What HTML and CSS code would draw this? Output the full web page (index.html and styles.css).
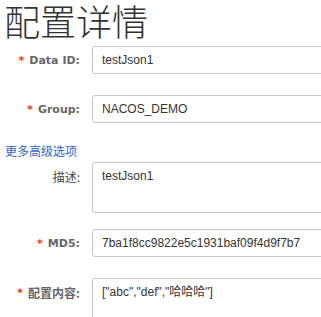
FILE: index.html
```html
<!DOCTYPE html>
<html lang="zh">
<head>
  <meta charset="UTF-8" />
  <meta name="viewport" content="width=device-width, initial-scale=1.0"/>
  <title>配置详情</title>
  <link rel="stylesheet" href="styles.css">
</head>
<body>
  <h1 class="title">配置详情</h1>

  <div class="form">
    <div class="form-item item-dataid">
      <label class="label required">Data ID:</label>
      <div class="control">
        <input class="input" type="text" value="testJson1" readonly />
      </div>
    </div>

    <div class="form-item item-group">
      <label class="label required">Group:</label>
      <div class="control">
        <input class="input" type="text" value="NACOS_DEMO" readonly />
      </div>
    </div>

    <a class="more-link" href="#">更多高级选项</a>

    <div class="form-item item-desc">
      <label class="label zh plain">描述:</label>
      <div class="control">
        <textarea class="textarea desc" readonly>testJson1</textarea>
      </div>
    </div>

    <div class="form-item item-md5">
      <label class="label required">MD5:</label>
      <div class="control">
        <input class="input" type="text" value="7ba1f8cc9822e5c1931baf09f4d9f7b7" readonly />
      </div>
    </div>

    <div class="form-item item-content">
      <label class="label zh required">配置内容:</label>
      <div class="control">
        <textarea class="textarea content" readonly>["abc","def","哈哈哈"]</textarea>
      </div>
    </div>
  </div>
</body>
</html>
```

FILE: styles.css
```css
body {
  font-family: 'Liberation Sans', 'Noto Sans CJK SC', sans-serif;
  font-size: 12px;
  color: #333;
  background-color: #fff;
  margin: 0;
  padding: 0;
  overflow: hidden;
}

.title {
  margin: 0;
  padding-left: 4px;
  font-family: 'Noto Sans CJK SC', sans-serif;
  font-size: 36px;
  font-weight: 300;
  line-height: 40px;
  color: #333;
}

.form {
  margin-top: 6px;
  width: 420px;
}

.form-item {
  display: flex;
  align-items: flex-start;
}

.item-dataid {
  margin-bottom: 21px;
}

.item-group {
  margin-bottom: 19px;
}

.item-desc {
  margin-bottom: 16px;
}

.item-md5 {
  margin-bottom: 21px;
}

.label {
  width: 80px;
  flex: none;
  margin-right: 12px;
  padding-top: 5px;
  font-family: 'DejaVu Sans', 'Noto Sans CJK SC', sans-serif;
  font-size: 11px;
  line-height: 20px;
  text-align: right;
  color: #666;
  font-weight: bold;
  white-space: nowrap;
}

.label.zh {
  font-family: 'Noto Sans CJK SC', sans-serif;
  font-size: 12px;
}

.label.plain {
  font-weight: normal;
  color: #444;
}

.required::before {
  content: "*";
  color: #ff3000;
  margin-right: 5px;
}

.control {
  flex: 1;
}

.input,
.textarea {
  display: block;
  width: 100%;
  box-sizing: border-box;
  border: 1px solid #c4c6cf;
  border-radius: 3px;
  padding: 3px 9px;
  font-family: 'Liberation Sans', 'Noto Sans CJK SC', sans-serif;
  font-size: 12px;
  line-height: 20px;
  color: #333;
  background: #fff;
  outline: none;
}

.input {
  height: 28px;
}

.textarea {
  resize: none;
  overflow: hidden;
}

.textarea.desc {
  height: 51px;
}

.textarea.content {
  height: 80px;
}

.more-link {
  display: block;
  padding-left: 5px;
  line-height: 20px;
  color: #2b66c9;
  text-decoration: none;
}
```
